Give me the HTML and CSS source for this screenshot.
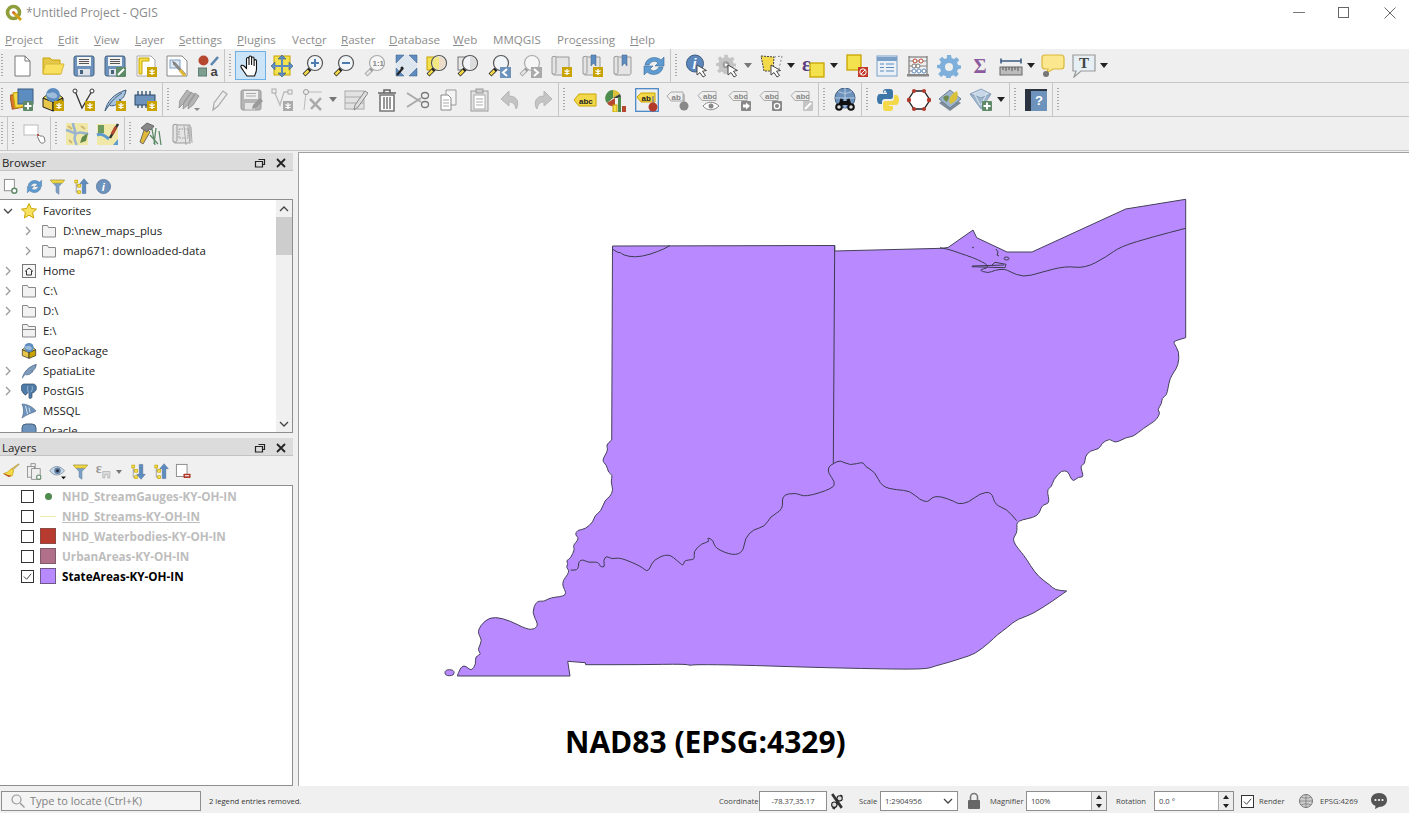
FILE: index.html
```html
<!DOCTYPE html>
<html>
	<head>
		<meta charset="UTF-8">
		<title>*Untitled Project - QGIS</title>
		<link rel="stylesheet" href="styles.css">
	</head>
	<body>
		<!-- icon sheet -->
		<svg class="sheet" xmlns="http://www.w3.org/2000/svg">
			<symbol id="badge" viewBox="0 0 24 24"><rect x="13" y="13" width="10" height="10" fill="#c9a400"/><path d="M18 15v6M15.4 16.5l5.2 3M15.4 19.5l5.2-3" stroke="#fff" stroke-width="1.3"/></symbol>
			<symbol id="badgeGray" viewBox="0 0 24 24"><rect x="13" y="13" width="10" height="10" fill="#aaa"/><path d="M18 15v6M15.4 16.5l5.2 3M15.4 19.5l5.2-3" stroke="#fff" stroke-width="1.3"/></symbol>
			<symbol id="plusBadge" viewBox="0 0 24 24"><rect x="13" y="13" width="10" height="10" rx="1" fill="#5f8a68"/><path d="M18 14.5v7M14.5 18h7" stroke="#fff" stroke-width="2"/></symbol>
			<symbol id="cursor" viewBox="0 0 24 24"><path d="M12 11v10l3-2.5 3 4.5 2.5-1.5-3-4.3 4-.7z" fill="#fff" stroke="#444"/></symbol>
			<symbol id="lens" viewBox="0 0 24 24"><path d="M9 15l-6 6" stroke="#222" stroke-width="4"/><path d="M7.5 16.5l-4 4" stroke="#f0d848" stroke-width="2.5"/><circle cx="14" cy="9" r="7.5" fill="#f2f5f8" stroke="#555" stroke-width="1.2"/></symbol>
			<symbol id="lensGray" viewBox="0 0 24 24"><path d="M9 15l-6 6" stroke="#999" stroke-width="4"/><path d="M7.5 16.5l-4 4" stroke="#e4e4e4" stroke-width="2.5"/><circle cx="14" cy="9" r="7.5" fill="#f6f6f6" stroke="#aaa" stroke-width="1.2"/></symbol>
			<symbol id="scroll" viewBox="0 0 24 24"><path d="M3 3c3-1.5 5 0 5 0h12v16c0 1-1 2-2 2H6c-2 0-3-1-3-2z" fill="#e4e4e4" stroke="#999"/><path d="M7 3v15c0 2-2 3-4 1" fill="none" stroke="#999"/></symbol>
			<symbol id="floppy" viewBox="0 0 24 24"><rect x="2" y="2" width="20" height="20" rx="2" fill="#6d93bd" stroke="#46627f"/><rect x="5" y="3" width="14" height="9" fill="#f2f2f2"/><path d="M7 5.5h10M7 7.5h10M7 9.5h10" stroke="#555"/><rect x="6" y="15" width="12" height="6.5" fill="#dde3e8"/><rect x="8" y="16" width="3" height="4" fill="#46627f"/></symbol>
			<symbol id="tag" viewBox="0 0 24 24"><path d="M1 7.5l4-4h14v9H5z" fill="#efefef" stroke="#aaa"/></symbol>
			<symbol id="gear" viewBox="0 0 24 24"><path d="M10 1h4l.6 3 2.4 1 2.5-1.7 2.8 2.8L20 8.6l1 2.4 3 .6v3l-3 .6-1 2.4 1.8 2.5-2.8 2.8-2.5-1.7-2.4 1-.6 3h-4l-.6-3-2.4-1-2.5 1.7-2.8-2.8L4 17l-1-2.4-3-.6v-3l3-.6 1-2.4-1.8-2.5 2.8-2.8L7.5 5l2.4-1z" fill="currentColor"/><circle cx="12" cy="13" r="4" fill="#efefef"/></symbol>
			<symbol id="hand" viewBox="0 0 24 24"><path d="M8 22c-2-3-5-7-6-9-.6-1.5 1.5-2.5 3-1l2.5 2.5V5c0-2 2.5-2 2.5 0v6V3.5c0-2 2.6-2 2.6 0V11V4.5c0-2 2.5-2 2.5 0V12V7c0-1.8 2.4-1.8 2.4 0v8c0 3-1 4.5-2 7z" fill="#fff" stroke="#111" stroke-width="1.1"/></symbol>
			<symbol id="panSel" viewBox="0 0 24 24"><rect x="4" y="2" width="16" height="19" fill="#f3e14d" stroke="#c8a400"/><path d="M12 1l4 4h-8zM12 23l4-4H8zM1 12l4-4v8zM23 12l-4-4v8z" fill="#5d8cc0" stroke="#3d5c80" stroke-width=".6"/><path d="M12 4v16M4 12h16" stroke="#5d8cc0" stroke-width="2"/></symbol>
			<symbol id="zoomIn" viewBox="0 0 24 24"><use href="#lens"/><path d="M14 5v8M10 9h8" stroke="#4d7cb0" stroke-width="2"/></symbol>
			<symbol id="zoomOut" viewBox="0 0 24 24"><use href="#lens"/><path d="M10 9h8" stroke="#4d7cb0" stroke-width="2"/></symbol>
			<symbol id="zoomFull" viewBox="0 0 24 24"><rect x="2" y="1" width="21" height="21" fill="#dde6ef"/><path d="M2 1h8L2 9zM23 1h-8l8 8zM23 22h-8l8-8zM2 22h8l-8-8z" fill="#5d8cc0" stroke="#3d5c80" stroke-width=".5"/><path d="M9 14l-6 7" stroke="#222" stroke-width="2"/><circle cx="8" cy="14" r="1.5" fill="#222"/></symbol>
			<symbol id="zoomSel" viewBox="0 0 24 24"><rect x="2" y="3" width="13" height="13" fill="#f3e14d" stroke="#c8a400"/><use href="#lens"/><path d="M14 2.5a6.5 6.5 0 0 0 0 13z" fill="#f3e14d" opacity=".7"/><path d="M14 2.5a6.5 6.5 0 0 1 0 13z" fill="#eedccb"/></symbol>
			<symbol id="zoomLayer" viewBox="0 0 24 24"><rect x="2" y="3" width="13" height="13" fill="#e8e8e8" stroke="#777"/><use href="#lens"/><path d="M14 2.5a6.5 6.5 0 0 1 0 13z" fill="#dcdcdc"/></symbol>
			<symbol id="zoomLast" viewBox="0 0 24 24"><use href="#lens"/><rect x="13" y="13" width="11" height="11" fill="#6d93bd"/><path d="M20 15l-4 3.5 4 3.5" fill="none" stroke="#fff" stroke-width="2"/></symbol>
			<symbol id="zoomNext" viewBox="0 0 24 24"><use href="#lensGray"/><rect x="13" y="13" width="11" height="11" fill="#aaa"/><path d="M16 15l4 3.5-4 3.5" fill="none" stroke="#fff" stroke-width="2"/></symbol>
			<symbol id="refresh" viewBox="0 0 24 24"><path d="M3 11C4 4 13 1 19 6l3-3v9h-9l3-3c-3-3-7-2-9 2z" fill="#5d9bd0" stroke="#3d6c98" stroke-width=".6"/><path d="M21 13c-1 7-10 10-16 5l-3 3v-9h9l-3 3c3 3 7 2 9-2z" fill="#5d9bd0" stroke="#3d6c98" stroke-width=".6"/></symbol>
			<symbol id="action" viewBox="0 0 24 24"><g color="#c4c4c4"><use href="#gear" width="20" height="20"/></g><circle cx="10" cy="10.8" r="3.500" fill="#999"/><path d="M8.8 9l3.200 1.800-3.200 1.800z" fill="#fff"/><use href="#cursor"/></symbol>
			<symbol id="selectTool" viewBox="0 0 24 24"><path d="M2 2l13 1-1 14H5z" fill="#f3d84a" stroke="#444" stroke-dasharray="2 1"/><path d="M15 3l8-1-3 13" fill="none" stroke="#888" stroke-dasharray="2 2"/><use href="#cursor"/></symbol>
			<symbol id="deselect" viewBox="0 0 24 24"><rect x="2" y="1" width="14" height="15" fill="#f3e14d" stroke="#c8a400" stroke-width="1.3"/><rect x="13" y="13" width="10" height="10" fill="#c0392b"/><circle cx="18" cy="18" r="3.2" fill="none" stroke="#fff"/><path d="M16 20l4-4" stroke="#fff"/></symbol>
			<symbol id="table" viewBox="0 0 24 24"><rect x="2" y="2" width="20" height="20" fill="#eaf0f6" stroke="#7ba0c8"/><path d="M2 3h20v4H2z" fill="#7ba0c8"/><path d="M5 10h4M11 10h8M5 13.5h4M11 13.5h8M5 17h4M11 17h8" stroke="#5d8cc0" stroke-width="1.2"/></symbol>
			<symbol id="abacus" viewBox="0 0 24 24"><path d="M3 2v19M21 2v19M3 3h18" stroke="#666" fill="none"/><rect x="1" y="20" width="22" height="2.5" fill="#888"/><path d="M3 7h18M3 12h18M3 17h18" stroke="#888"/><circle cx="9" cy="7" r="2" fill="#fff" stroke="#b5482f"/><circle cx="15" cy="7" r="2" fill="#fff" stroke="#b5482f"/><circle cx="8" cy="12" r="2" fill="#fff" stroke="#777"/><circle cx="12" cy="12" r="2" fill="#fff" stroke="#777"/><circle cx="8" cy="17" r="2" fill="#fff" stroke="#5d8cc0"/><circle cx="13" cy="17" r="2" fill="#fff" stroke="#5d8cc0"/><circle cx="18" cy="17" r="2" fill="#fff" stroke="#5d8cc0"/></symbol>
			<symbol id="ruler" viewBox="0 0 24 24"><path d="M2 7h20M2 4.5v5M22 4.5v5" stroke="#3d5c80" stroke-width="1.6"/><rect x="1" y="13" width="22" height="8" fill="#bbb" stroke="#666"/><path d="M4 13v3M7 13v4M10 13v3M13 13v4M16 13v3M19 13v4" stroke="#555"/></symbol>
			<symbol id="tip" viewBox="0 0 24 24"><path d="M4 1h16c2 0 3 1 3 3v8c0 2-1 3-3 3H12l-6 4 1-4H4c-2 0-3-1-3-3V4c0-2 1-3 3-3z" fill="#fbe88e" stroke="#d9b838" stroke-width="1.2"/><circle cx="5" cy="20" r="3" fill="#777"/></symbol>
			<symbol id="annot" viewBox="0 0 24 24"><path d="M1 1h22v16H9l-7 6 2-6H1z" fill="#e6f0f4" stroke="#999" stroke-width="1.2"/></symbol>
			<symbol id="dsm" viewBox="0 0 24 24"><rect x="1" y="6" width="14" height="14" transform="rotate(-10 8 13)" fill="#d9772b" stroke="#a5581e"/><rect x="4" y="4" width="14" height="15" transform="rotate(-8 11 11)" fill="#f3d84a" stroke="#c8a400"/><rect x="8" y="1" width="15" height="15" fill="#5d8cc0" stroke="#3d5c80"/><use href="#plusBadge"/></symbol>
			<symbol id="gpkg" viewBox="0 0 24 24"><path d="M2 10v9l10 4V14z" fill="#e7c64a" stroke="#222"/><path d="M22 10v9l-10 4V14z" fill="#c9a400" stroke="#222"/><path d="M2 10l10-8 10 8-10 4z" fill="#f3e14d" stroke="#222"/><circle cx="12" cy="7" r="7" fill="#5d8cc0"/><path d="M6 5c3 1 5-2 8 0s3 4 1 5-6 0-9-2" fill="#9dbcdb"/></symbol>
			<symbol id="gpkgNew" viewBox="0 0 24 24"><use href="#gpkg"/><use href="#badge"/></symbol>
			<symbol id="shp" viewBox="0 0 24 24"><path d="M3 3l7 17 10-17" fill="none" stroke="#333" stroke-width="1.3"/><circle cx="3" cy="3" r="2" fill="#fff" stroke="#333"/><circle cx="20" cy="3" r="2" fill="#fff" stroke="#333"/><use href="#badge"/></symbol>
			<symbol id="feather" viewBox="0 0 24 24"><path d="M2 23c2-9 8-17 21-21-1 6-3 9-7 10l2 .5c-3 4-7 6-11 5" fill="#a9c4e0" stroke="#3e5a7a"/><path d="M2 23C7 15 12 9 19 5" stroke="#3e5a7a" fill="none"/></symbol>
			<symbol id="chip" viewBox="0 0 24 24"><rect x="1" y="7" width="20" height="10" fill="#6d93bd" stroke="#2f4a68"/><path d="M4 3v4M8 3v4M12 3v4M16 3v4M4 17v3M8 17v3M12 17v3" stroke="#2f4a68" stroke-width="1.3"/><use href="#badge"/></symbol>
			<symbol id="edits" viewBox="0 0 24 24"><path d="M2 20l1-8 7-10 4 3-7 10zM6 21l1-7 7-10 4 3-7 10zM11 21l1-7 6-9 4 3-6 9z" fill="#b5b5b5" stroke="#999"/><path d="M17 20h6l-3 3z" fill="#888"/></symbol>
			<symbol id="pencil" viewBox="0 0 24 24"><path d="M5 22l1-7 9-12 4 3-9 12z" fill="#eee" stroke="#aaa" stroke-width="1.2"/></symbol>
			<symbol id="saveGray" viewBox="0 0 24 24"><rect x="2" y="2" width="20" height="20" rx="2" fill="#b5b5b5" stroke="#999"/><rect x="5" y="3" width="14" height="8" fill="#efefef"/><path d="M7 5.5h10M7 8h10" stroke="#aaa"/><rect x="6" y="15" width="10" height="6.5" fill="#e4e4e4"/><path d="M13 21l1-4 7-7 3 3-7 7z" fill="#999"/></symbol>
			<symbol id="vertexAdd" viewBox="0 0 24 24"><path d="M4 3l6 14 4-13 7 0" fill="none" stroke="#bbb" stroke-width="1.3"/><rect x="2" y="1" width="4" height="4" fill="#efefef" stroke="#aaa"/><rect x="18" y="2" width="4" height="4" fill="#efefef" stroke="#aaa"/><use href="#badgeGray"/></symbol>
			<symbol id="vertexTool" viewBox="0 0 24 24"><path d="M5 4l-2 18M5 4h16" stroke="#bbb" fill="none"/><circle cx="5" cy="4" r="2.5" fill="#efefef" stroke="#999"/><path d="M9 11l11 11M20 10L10 21" stroke="#aaa" stroke-width="2.5"/></symbol>
			<symbol id="attrEdit" viewBox="0 0 24 24"><rect x="1" y="3" width="19" height="18" fill="#e2e2e2" stroke="#aaa"/><path d="M1 9h19M1 15h19" stroke="#aaa"/><path d="M10 22l1-5 10-14 3 2-10 14z" fill="#ddd" stroke="#888"/></symbol>
			<symbol id="trash" viewBox="0 0 24 24"><path d="M3 5h18M9 5V2h6v3" fill="none" stroke="#666" stroke-width="1.6"/><path d="M5 7h14v16H5z" fill="#fff" stroke="#777" stroke-width="1.6"/><path d="M9 9v12M12 9v12M15 9v12" stroke="#777" stroke-width="1.5"/></symbol>
			<symbol id="cut" viewBox="0 0 24 24"><path d="M1 5l14 9M1 19l14-9" stroke="#aaa" stroke-width="2"/><ellipse cx="19" cy="7.5" rx="3.5" ry="3" fill="#efefef" stroke="#777" stroke-width="1.3"/><ellipse cx="19" cy="16.5" rx="3.5" ry="3" fill="#efefef" stroke="#777" stroke-width="1.3"/></symbol>
			<symbol id="copy" viewBox="0 0 24 24"><path d="M9 2h10v15H9z" fill="#f4f4f4" stroke="#999"/><path d="M4 7h7l3 3v12H4z" fill="#fff" stroke="#888"/><path d="M6 12h6M6 15h6M6 18h6" stroke="#aaa"/></symbol>
			<symbol id="paste" viewBox="0 0 24 24"><rect x="3" y="3" width="17" height="20" fill="#e2e2e2" stroke="#999"/><rect x="8" y="1" width="7" height="4" fill="#ccc" stroke="#999"/><rect x="6" y="7" width="11" height="14" fill="#fff" stroke="#aaa"/><path d="M8 11h7M8 14h7M8 17h7" stroke="#aaa"/></symbol>
			<symbol id="undo" viewBox="0 0 24 24"><path d="M10 3L2 11l8 7v-4c4 0 6 2 7 7 3-4 3-13-7-13z" fill="#c4c4c4" stroke="#b5b5b5"/></symbol>
			<symbol id="redo" viewBox="0 0 24 24"><path d="M14 3l8 8-8 7v-4c-4 0-6 2-7 7-3-4-3-13 7-13z" fill="#c4c4c4" stroke="#b5b5b5"/></symbol>
			<symbol id="labelTag" viewBox="0 0 24 24"><path d="M1 12l5-6h17v12H6z" fill="#f3d84a" stroke="#c8a400"/></symbol>
			<symbol id="diagram" viewBox="0 0 24 24"><path d="M9 2a8 8 0 0 0-6 13l6-5z" fill="#4e8c4e"/><path d="M9 2a8 8 0 0 1 7 4l-7 4z" fill="#d9c23a"/><path d="M16 6a8 8 0 0 1 1 4H9z" fill="#3e3e3e"/><path d="M3 15a8 8 0 0 0 8 3v-8z" fill="#b5482f"/><rect x="9" y="17" width="4" height="7" fill="#f3e14d" stroke="#c8a400"/><rect x="14" y="9" width="3" height="15" fill="#4e8c4e"/><rect x="18" y="18" width="4" height="6" fill="#b5482f"/></symbol>
			<symbol id="pin" viewBox="0 0 24 24"><rect x=".7" y=".7" width="22.6" height="22.6" fill="#efefef" stroke="#3f7fc4" stroke-width="1.2"/><path d="M2 9l4-4h14v9H6z" fill="#f3d84a" stroke="#c8a400"/></symbol>
			<symbol id="pinHead" viewBox="0 0 24 24"><path d="M18 8v9" stroke="#888" stroke-width="1.5"/><circle cx="18" cy="19" r="4.5" fill="#b33a2a"/></symbol>
			<symbol id="pinGray" viewBox="0 0 24 24"><path d="M1 8l4-4h12v9H5z" fill="#efefef" stroke="#aaa"/></symbol>
			<symbol id="pinGrayHead" viewBox="0 0 24 24"><path d="M18 6v10" stroke="#aaa" stroke-width="1.5"/><circle cx="18" cy="18" r="4.5" fill="#888"/></symbol>
			<symbol id="eyeBadge" viewBox="0 0 24 24"><path d="M6 18c4-5 11-5 16 0-5 5-12 5-16 0z" fill="#fff" stroke="#888"/><circle cx="14" cy="18" r="2.5" fill="#888"/></symbol>
			<symbol id="moveBadge" viewBox="0 0 24 24"><rect x="13" y="13" width="10" height="10" rx="1" fill="#888"/><path d="M15 16.5h3v-2l4 3.5-4 3.5v-2h-3z" fill="#fff"/></symbol>
			<symbol id="rotBadge" viewBox="0 0 24 24"><rect x="13" y="13" width="10" height="10" rx="1" fill="#888"/><circle cx="18" cy="18" r="2.7" fill="none" stroke="#fff" stroke-width="1.3"/></symbol>
			<symbol id="editBadge" viewBox="0 0 24 24"><rect x="13" y="13" width="10" height="10" rx="1" fill="#c4c4c4"/><path d="M15 21l6-6" stroke="#fff" stroke-width="2"/></symbol>
			<symbol id="meta" viewBox="0 0 24 24"><circle cx="12" cy="10" r="10" fill="#6d93bd" stroke="#3d5c80"/><path d="M2 10h20M12 0v20M5 3c4 3 10 3 14 0M5 17c4-3 10-3 14 0" stroke="#c9d8e8" fill="none" stroke-width=".8"/><path d="M9 13h6v4H9z" fill="#111"/><path d="M9 11l-2 6M15 11l2 6" stroke="#111" stroke-width="3"/><circle cx="6" cy="19" r="3.8" fill="#111"/><circle cx="18" cy="19" r="3.8" fill="#111"/><circle cx="6" cy="19" r="1.8" fill="#ddd"/><circle cx="18" cy="19" r="1.8" fill="#ddd"/></symbol>
			<symbol id="python" viewBox="0 0 24 24"><path d="M10 1h4c2 0 3 1 3 3v5c0 1-1 2-2 2H9c-2 0-3 1-3 3v2H4c-2 0-3-2-3-5s1-5 3-5h7V4.500H7V4c0-2 1-3 3-3z" fill="#3f76a8"/><path d="M18 7h2c2 0 3 2 3 5s-1 5-3 5h-7v1h4v2c0 2-1 3-3 3h-4c-2 0-3-1-3-3v-5c0-1 1-2 2-2h6c2 0 3-1 3-3z" fill="#f3d84a"/><circle cx="9" cy="3.5" r="1" fill="#fff"/></symbol>
			<symbol id="hex" viewBox="0 0 24 24"><path d="M7 3h10l6 9-6 9H7l-6-9z" fill="#fff" stroke="#222" stroke-width="1.3"/><g fill="#b33a2a"><circle cx="7" cy="3" r="2"/><circle cx="17" cy="3" r="2"/><circle cx="22" cy="12" r="2.2"/><circle cx="17" cy="21" r="2"/><circle cx="7" cy="21" r="2"/><circle cx="2" cy="12" r="2.2"/></g></symbol>
			<symbol id="leaf" viewBox="0 0 24 24"><path d="M1 15l11 8 11-8-3-2-8 6-8-6z" fill="#7e8a96"/><path d="M1 11l11-9 11 9-11 9z" fill="#9db5cc" stroke="#6a7f93"/><path d="M12 16c-2-5 1-10 7-13 2 5 0 11-7 13z" fill="#d9c23a"/><path d="M5 10c2-3 5-3 6-1 0 3-3 5-3 5z" fill="#6e8a4e"/></symbol>
			<symbol id="layerPlus" viewBox="0 0 24 24"><path d="M1 6l11-5 10 5-10 4z" fill="#c9d8e8" stroke="#8aa2bc"/><path d="M1 6l11 15 10-15-10 4z" fill="#9db5cc" stroke="#8aa2bc"/><path d="M5 5l6 12M18 5l-6 12" stroke="#e0e8f0"/><use href="#plusBadge"/></symbol>
			<symbol id="help" viewBox="0 0 24 24"><rect x="1" y="1" width="22" height="22" fill="#6d93bd"/><rect x="1" y="1" width="6" height="22" fill="#2b3340"/><rect x="1" y="1" width="22" height="2" fill="#2b3340"/></symbol>
			<symbol id="rectCursor" viewBox="0 0 24 24"><rect x="2" y="3" width="14" height="10" fill="#fff" stroke="#bbb"/><path d="M18 14c-2-2-3 0-2 2l2 4c1 2 5 1 5-1l-1-4c-1-1-2-1-4-1z" fill="#fff" stroke="#777"/><circle cx="16" cy="13" r="1" fill="#b33a2a"/></symbol>
			<symbol id="mapA" viewBox="0 0 24 24"><rect x="1" y="1" width="22" height="22" fill="#efe8a8"/><path d="M1 8c6 1 8 5 12 3s7 2 10 0M8 1c0 5 4 8 2 13s2 6 1 9" stroke="#9ab4d0" stroke-width="2.5" fill="none"/><path d="M3 4l4 3M16 4l4 3M4 18l3 3" stroke="#d0b870" stroke-width="2"/><path d="M15 21l2-6 6-4-2 8z" fill="#5f8a4e"/></symbol>
			<symbol id="mapB" viewBox="0 0 24 24"><rect x="1" y="2" width="21" height="21" fill="#f0e8a8"/><path d="M1 13c5-2 8 1 12 4" stroke="#5d9bd0" stroke-width="3" fill="none"/><rect x="2" y="3" width="6" height="8" fill="#6e9a5e"/><path d="M14 16L22 2" stroke="#333" stroke-width="2.5"/><path d="M16 12l4-7" stroke="#b5482f" stroke-width="3"/><path d="M17 23l5-6v6z" fill="#5d9bd0"/></symbol>
			<symbol id="hammer" viewBox="0 0 24 24"><path d="M6 5l5 5-7 12-3-2z" fill="#e0b83a" stroke="#555" stroke-width=".8"/><path d="M2 6l6-5 7 3-3 4-2-1-2 3z" fill="#888" stroke="#555" stroke-width=".8"/><path d="M13 7l3 16M17 6l-2 16M20 9l2 14M11 13l8 9" stroke="#5f8a68" stroke-width="1.3"/></symbol>
			<symbol id="scrollLines" viewBox="0 0 24 24"><use href="#scroll"/><rect x="9" y="7" width="9" height="9" fill="none" stroke="#999" stroke-dasharray="1.5 1"/><path d="M14 4l2 19M18 4l2 18M21 5l1 16" stroke="#aaa"/></symbol>
			<symbol id="addGroup" viewBox="0 0 24 24"><rect x="2" y="2" width="14" height="16" fill="#fff" stroke="#888" stroke-width="1.3"/><circle cx="16" cy="18" r="3.5" fill="#fff" stroke="#5f8a68" stroke-width="2"/></symbol>
			<symbol id="filter" viewBox="0 0 24 24"><path d="M2 3h20l-8 9v11l-4-3v-8z" fill="#7ba0c8" stroke="#5d7ea0" stroke-width=".8"/><path d="M2 3h20l-3 4H5z" fill="#f3d84a" stroke="#c8a400" stroke-width=".8"/></symbol>
			<symbol id="treeUp" viewBox="0 0 24 24"><path d="M6 4v16h4M6 11h4" fill="none" stroke="#888"/><rect x="4" y="3" width="4" height="4" fill="#f3e14d" stroke="#c8a400"/><rect x="8" y="9" width="4" height="4" fill="#f3e14d" stroke="#c8a400"/><rect x="8" y="18" width="4" height="4" fill="#f3e14d" stroke="#c8a400"/><path d="M17 1l6 7h-3.5v14h-5V8H11z" fill="#5d8cc0" stroke="#3d5c80" stroke-width=".6"/></symbol>
			<symbol id="treeDown" viewBox="0 0 24 24"><path d="M6 4v16h4M6 11h4" fill="none" stroke="#888"/><rect x="4" y="3" width="4" height="4" fill="#f3e14d" stroke="#c8a400"/><rect x="8" y="9" width="4" height="4" fill="#f3e14d" stroke="#c8a400"/><rect x="8" y="18" width="4" height="4" fill="#f3e14d" stroke="#c8a400"/><path d="M17 23l6-7h-3.5V2h-5v14H11z" fill="#5d8cc0" stroke="#3d5c80" stroke-width=".6"/></symbol>
			<symbol id="brush" viewBox="0 0 24 24"><path d="M14 10L23 2l-1-1-10 7z" fill="#e0b83a" stroke="#886" stroke-width=".6"/><path d="M12 8l3 3-2 7-5 1L1 15l5-2z" fill="#f3d84a" stroke="#c8a400"/><path d="M1 15l7 4 3-1" fill="#b5482f" stroke="#b5482f"/></symbol>
			<symbol id="dup" viewBox="0 0 24 24"><rect x="7" y="1" width="6" height="6" fill="#efefef" stroke="#777"/><rect x="2" y="5" width="10" height="15" fill="#efefef" stroke="#777"/><rect x="8" y="8" width="12" height="15" fill="#efefef" stroke="#777"/><circle cx="18" cy="20" r="3" fill="#fff" stroke="#5f8a68" stroke-width="1.5"/></symbol>
			<symbol id="eye" viewBox="0 0 24 24"><path d="M1 11c6-8 14-8 21 0-7 8-15 8-21 0z" fill="#c9d8e8" stroke="#6a7f93"/><circle cx="12" cy="11" r="4.5" fill="#5d7ea0"/><circle cx="12" cy="11" r="2" fill="#223"/><path d="M17 19h7l-3.5 4z" fill="#111"/></symbol>
			<symbol id="exprGrayBox" viewBox="0 0 24 24"><path d="M11 12h10v9h-3v-5h-4v5h-3z" fill="#ddd" stroke="#aaa"/></symbol>
			<symbol id="removeLayer" viewBox="0 0 24 24"><rect x="2" y="2" width="15" height="17" fill="#fff" stroke="#888" stroke-width="1.3"/><rect x="12" y="15" width="10" height="6" rx="1" fill="#b33a2a"/><path d="M14 18h6" stroke="#fff" stroke-width="1.5"/></symbol>
			<symbol id="folder" viewBox="0 0 16 16"><path d="M1.5 14V2.5h5l1 2h7V14z" fill="#f2f2f2" stroke="#888"/></symbol>
			<symbol id="folderOpen" viewBox="0 0 16 16"><path d="M1.5 14V1.5h5l1 2h7V14z" fill="#f2f2f2" stroke="#888"/><path d="M1.5 6.5h13" stroke="#888"/></symbol>
			<symbol id="home" viewBox="0 0 16 16"><rect x="1.5" y="1.5" width="13" height="13" fill="#f6f6f6" stroke="#777"/><path d="M4 8.5l4-3.5 4 3.5M5.5 8v4h5V8" fill="none" stroke="#333"/></symbol>
			<symbol id="star" viewBox="0 0 16 16"><path d="M8 .5l2.3 5 5.200.6-3.900 3.500 1.100 5.400L8 12.200 3.300 15l1.100-5.400L.5 6.100l5.200-.6z" fill="#f7e15f" stroke="#c8a400"/></symbol>
			<symbol id="elephant" viewBox="0 0 16 16"><path d="M3 1h9c3 0 4 3 3 6-1 2-3 3-4 3v4c0 1-2 2-3 1V10H6c-1 3-2 2-3 1S0 7 0 5s1-4 3-4z" fill="#4f7ba8" stroke="#2f4a68" stroke-width=".7"/><path d="M7 3c-1 3 0 6 1 8M11 3c1 2 0 5-1 6" stroke="#c9d8e8" stroke-width=".6" fill="none"/></symbol>
			<symbol id="mssql" viewBox="0 0 16 16"><path d="M1 1c5 0 11 3 14 7-3 2-9 3-14 7 2-5 2-9 0-14z" fill="#6d93bd" stroke="#46627f" stroke-width=".6"/><path d="M4.5 3l2 8M8 4.5l1 5" stroke="#d7e2ee"/></symbol>
			<symbol id="oracle" viewBox="0 0 16 16"><rect x="1" y="1" width="14" height="14" rx="4" fill="#6d93bd" stroke="#46627f"/></symbol>
			<symbol id="featherSm" viewBox="0 0 24 24"><path d="M2 23c2-9 8-17 21-21-1 6-3 9-7 10l2 .5c-3 4-7 6-11 5" fill="#7f9cbc" stroke="#3e5a7a"/></symbol>
			<symbol id="dock" viewBox="0 0 12 12"><path d="M4.5 2.5h6v5h-2M1.5 4.5h7v5.500h-7z" fill="none" stroke="#222" stroke-width="1.2"/></symbol>
			<symbol id="closeX" viewBox="0 0 12 12"><path d="M2 2l8 8M10 2l-8 8" stroke="#222" stroke-width="1.8"/></symbol>
			<symbol id="chevRight" viewBox="0 0 10 10"><path d="M3 1l4 4-4 4" fill="none" stroke="#999" stroke-width="1.3"/></symbol>
			<symbol id="chevDown" viewBox="0 0 10 10"><path d="M1 3l4 4 4-4" fill="none" stroke="#444" stroke-width="1.3"/></symbol>
			<symbol id="chevUp" viewBox="0 0 10 10"><path d="M1 7l4-4 4 4" fill="none" stroke="#444" stroke-width="1.3"/></symbol>
			<symbol id="logo" viewBox="0 0 18 18"><circle cx="8.5" cy="8.5" r="6" fill="none" stroke="#8f9e3b" stroke-width="3.6"/><path d="M9 9l7 7" stroke="#d4a017" stroke-width="3"/><circle cx="8.5" cy="8.5" r="1.5" fill="#d46a2a"/></symbol>
			<symbol id="search" viewBox="0 0 14 14"><circle cx="5.5" cy="5.5" r="4.5" fill="none" stroke="#999" stroke-width="1.2"/><path d="M9 9l4.5 4.5" stroke="#999" stroke-width="1.4"/></symbol>
			<symbol id="coordIcon" viewBox="0 0 16 16"><path d="M3 1l9 13M12 2L4 15" stroke="#333" stroke-width="2.5"/><circle cx="5" cy="11" r="2.5" fill="#ddd" stroke="#222"/><circle cx="10" cy="5" r="2.5" fill="#ddd" stroke="#222"/></symbol>
			<symbol id="lock" viewBox="0 0 14 18"><path d="M3.5 8V5a3.5 3.5 0 0 1 7 0v3" fill="none" stroke="#777" stroke-width="1.6"/><rect x="1" y="8" width="12" height="9" rx="1" fill="#666"/></symbol>
			<symbol id="globe" viewBox="0 0 16 16"><circle cx="8" cy="8" r="6.5" fill="#ccc" stroke="#777"/><path d="M1.5 8h13M8 1.5v13M3 4c3 1.5 7 1.5 10 0M3 12c3-1.5 7-1.5 10 0" stroke="#777" fill="none" stroke-width=".7"/></symbol>
			<symbol id="chat" viewBox="0 0 18 18"><path d="M9 1c5 0 8 3 8 7s-3 7-8 7l-4 2 .5-3C3 13 1 11 1 8c0-4 3-7 8-7z" fill="#555"/><circle cx="5.5" cy="8" r="1.1" fill="#fff"/><circle cx="9" cy="8" r="1.1" fill="#fff"/><circle cx="12.5" cy="8" r="1.1" fill="#fff"/></symbol>
			<symbol id="new2" viewBox="0 0 24 24"><path d="M5 2h10l5 5v15H5z" fill="#fff" stroke="#777"/><path d="M15 2v5h5" fill="none" stroke="#777"/></symbol>
			<symbol id="open" viewBox="0 0 24 24"><path d="M2 20V4h7l2 2h8v14z" fill="#e5c84a" stroke="#c8a400"/><path d="M2 20L4 10h19l-3 10z" fill="#f7e15f" stroke="#d9b838"/></symbol>
			<symbol id="saveAs" viewBox="0 0 24 24"><use href="#floppy"/><rect x="13" y="13" width="10" height="10" rx="1" fill="#5f8a68"/><path d="M15 21l6-6" stroke="#fff" stroke-width="2"/></symbol>
			<symbol id="layoutNew" viewBox="0 0 24 24"><path d="M3 2h14l4 4v16H3z" fill="#fff" stroke="#aaa"/><path d="M5 4h10v3H8v13H5z" fill="#f3e14d" stroke="#c8a400"/><use href="#badge"/></symbol>
			<symbol id="layoutMgr" viewBox="0 0 24 24"><path d="M2 2h15l5 5v15H2z" fill="#fff" stroke="#888"/><rect x="5" y="6" width="10" height="8" fill="#dfe8f0" stroke="#7ba0c8"/><path d="M9 9l11 12" stroke="#888" stroke-width="3"/><path d="M7 7l3 1-1 3z" fill="#777"/><path d="M15 16l5 6" stroke="#e0b83a" stroke-width="3"/></symbol>
			<symbol id="style" viewBox="0 0 24 24"><circle cx="7.5" cy="6.5" r="5" fill="#b5482f"/><path d="M15 11l7-8" stroke="#5d85b0" stroke-width="2.5"/><rect x="2.5" y="14" width="8" height="8" fill="#7e9e8f" stroke="#5f7f70"/></symbol>
			<symbol id="mapNew" viewBox="0 0 24 24"><use href="#scroll"/><use href="#badge"/></symbol>
			<symbol id="markNew" viewBox="0 0 24 24"><use href="#scroll"/><path d="M11 1h5v11l-2.5-3-2.5 3z" fill="#5d8cc0" stroke="#3d5c80" stroke-width=".5"/><use href="#badge"/></symbol>
			<symbol id="marks" viewBox="0 0 24 24"><use href="#scroll"/><path d="M11 1h5v11l-2.5-3-2.5 3z" fill="#5d8cc0" stroke="#3d5c80" stroke-width=".5"/></symbol>
			<symbol id="featherNew" viewBox="0 0 24 24"><use href="#feather"/><use href="#badge"/></symbol>
		</svg>

		<div class="app">
			<div class="titleBar">
				<svg class="logo"><use href="#logo"/></svg>
				<span class="titleText">*Untitled Project - QGIS</span>
				<div class="winButtons">
					<span class="winMin"></span>
					<span class="winMax"></span>
					<svg class="winClose" viewBox="0 0 12 12"><path d="M.5 .5l11 11M11.5 .5l-11 11" stroke="#666"/></svg>
				</div>
			</div>

			<div class="menuBar">
				<span class="m1"><u>P</u>roject</span>
				<span class="m2"><u>E</u>dit</span>
				<span class="m3"><u>V</u>iew</span>
				<span class="m4"><u>L</u>ayer</span>
				<span class="m5"><u>S</u>ettings</span>
				<span class="m6"><u>P</u>lugins</span>
				<span class="m7">Vect<u>o</u>r</span>
				<span class="m8"><u>R</u>aster</span>
				<span class="m9"><u>D</u>atabase</span>
				<span class="m10"><u>W</u>eb</span>
				<span class="m11">MMQGIS</span>
				<span class="m12">Pro<u>c</u>essing</span>
				<span class="m13"><u>H</u>elp</span>
			</div>

			<div class="toolRow">
				<div class="group first">
					<i class="grip"></i>
					<b class="tool"><svg><use href="#new2"/></svg></b>
					<b class="tool"><svg><use href="#open"/></svg></b>
					<b class="tool"><svg><use href="#floppy"/></svg></b>
					<b class="tool"><svg><use href="#saveAs"/></svg></b>
					<b class="tool"><svg><use href="#layoutNew"/></svg></b>
					<b class="tool"><svg><use href="#layoutMgr"/></svg></b>
					<b class="tool"><svg viewBox="0 0 24 24"><use href="#style"/><text x="14.5" y="22" class="iconText" font-size="13" fill="#444">a</text></svg></b>
				</div>
				<div class="group">
					<i class="grip"></i>
					<b class="tool active"><svg><use href="#hand"/></svg></b>
					<b class="tool"><svg><use href="#panSel"/></svg></b>
					<b class="tool"><svg><use href="#zoomIn"/></svg></b>
					<b class="tool"><svg><use href="#zoomOut"/></svg></b>
					<b class="tool"><svg viewBox="0 0 24 24"><use href="#lensGray"/><text x="9.5" y="12" class="iconText" font-size="8" fill="#888" font-weight="700">1:1</text></svg></b>
					<b class="tool"><svg><use href="#zoomFull"/></svg></b>
					<b class="tool"><svg><use href="#zoomSel"/></svg></b>
					<b class="tool"><svg><use href="#zoomLayer"/></svg></b>
					<b class="tool"><svg><use href="#zoomLast"/></svg></b>
					<b class="tool"><svg><use href="#zoomNext"/></svg></b>
					<b class="tool"><svg><use href="#mapNew"/></svg></b>
					<b class="tool"><svg><use href="#markNew"/></svg></b>
					<b class="tool"><svg><use href="#marks"/></svg></b>
					<b class="tool"><svg><use href="#refresh"/></svg></b>
				</div>
				<div class="group last">
					<i class="grip"></i>
					<b class="tool"><svg viewBox="0 0 24 24"><circle cx="10" cy="9.5" r="8.5" fill="#5b87bd" stroke="#3d5c80"/><text x="7.5" y="14.5" class="iconText" font-size="14" font-weight="700" font-style="italic" fill="#fff">i</text><use href="#cursor"/></svg></b>
					<b class="tool drop"><svg><use href="#action"/></svg><em class="arrow gray"></em></b>
					<b class="tool drop"><svg><use href="#selectTool"/></svg><em class="arrow"></em></b>
					<b class="tool drop"><svg viewBox="0 0 24 24"><rect x="8" y="9" width="14" height="14" fill="#f3e14d" stroke="#c8a400" stroke-width="1.3"/><text x="0" y="17" class="serifText" font-size="20" fill="#5a3d80">&#949;</text></svg><em class="arrow"></em></b>
					<b class="tool"><svg><use href="#deselect"/></svg></b>
					<b class="tool narrow"><svg><use href="#table"/></svg></b>
					<b class="tool"><svg><use href="#abacus"/></svg></b>
					<b class="tool"><svg class="gearBlue"><use href="#gear"/></svg></b>
					<b class="tool"><svg viewBox="0 0 24 24"><text x="12" y="19" text-anchor="middle" class="serifText" font-size="20" font-weight="700" fill="#8e5a9e">&#931;</text></svg></b>
					<b class="tool drop"><svg><use href="#ruler"/></svg><em class="arrow"></em></b>
					<b class="tool narrow"><svg><use href="#tip"/></svg></b>
					<b class="tool drop"><svg viewBox="0 0 24 24"><use href="#annot"/><text x="12" y="14" text-anchor="middle" class="serifText" font-size="15" font-weight="700" fill="#444">T</text></svg><em class="arrow"></em></b>
				</div>
			</div>

			<div class="toolRow">
				<div class="group first">
					<i class="grip"></i>
					<b class="tool"><svg><use href="#dsm"/></svg></b>
					<b class="tool"><svg><use href="#gpkgNew"/></svg></b>
					<b class="tool"><svg><use href="#shp"/></svg></b>
					<b class="tool"><svg><use href="#featherNew"/></svg></b>
					<b class="tool"><svg><use href="#chip"/></svg></b>
				</div>
				<div class="group">
					<i class="grip"></i>
					<b class="tool"><svg><use href="#edits"/></svg></b>
					<b class="tool"><svg><use href="#pencil"/></svg></b>
					<b class="tool"><svg><use href="#saveGray"/></svg></b>
					<b class="tool"><svg><use href="#vertexAdd"/></svg></b>
					<b class="tool drop"><svg><use href="#vertexTool"/></svg><em class="arrow gray"></em></b>
					<b class="tool"><svg><use href="#attrEdit"/></svg></b>
					<b class="tool"><svg><use href="#trash"/></svg></b>
					<b class="tool"><svg><use href="#cut"/></svg></b>
					<b class="tool"><svg><use href="#copy"/></svg></b>
					<b class="tool"><svg><use href="#paste"/></svg></b>
					<b class="tool"><svg><use href="#undo"/></svg></b>
					<b class="tool"><svg><use href="#redo"/></svg></b>
				</div>
				<div class="group">
					<i class="grip"></i>
					<b class="tool"><svg viewBox="0 0 24 24"><use href="#labelTag"/><text x="6" y="15.5" class="tagText" fill="#222">abc</text></svg></b>
					<b class="tool"><svg><use href="#diagram"/></svg></b>
					<b class="tool"><svg viewBox="0 0 24 24"><use href="#pin"/><text x="6.5" y="12.5" class="tagText" fill="#222">ab</text><use href="#pinHead"/></svg></b>
					<b class="tool"><svg viewBox="0 0 24 24"><use href="#pinGray"/><text x="5.5" y="11.5" class="tagText" fill="#888">ab</text><use href="#pinGrayHead"/></svg></b>
					<b class="tool"><svg viewBox="0 0 24 24"><use href="#tag"/><text x="6" y="11" class="tagText" fill="#888">abc</text><use href="#eyeBadge"/></svg></b>
					<b class="tool"><svg viewBox="0 0 24 24"><use href="#tag"/><text x="6" y="11" class="tagText" fill="#888">abc</text><use href="#moveBadge"/></svg></b>
					<b class="tool"><svg viewBox="0 0 24 24"><use href="#tag"/><text x="6" y="11" class="tagText" fill="#888">abc</text><use href="#rotBadge"/></svg></b>
					<b class="tool"><svg viewBox="0 0 24 24"><use href="#tag"/><text x="6" y="11" class="tagText" fill="#888">abc</text><use href="#editBadge"/></svg></b>
				</div>
				<div class="group">
					<i class="grip"></i>
					<b class="tool"><svg><use href="#meta"/></svg></b>
				</div>
				<div class="group">
					<i class="grip"></i>
					<b class="tool"><svg><use href="#python"/></svg></b>
					<b class="tool"><svg><use href="#hex"/></svg></b>
					<b class="tool"><svg><use href="#leaf"/></svg></b>
					<b class="tool drop"><svg><use href="#layerPlus"/></svg><em class="arrow"></em></b>
				</div>
				<div class="group">
					<i class="grip"></i>
					<b class="tool"><svg viewBox="0 0 24 24"><use href="#help"/><text x="15" y="17" text-anchor="middle" class="iconText" font-size="13" fill="#fff">?</text></svg></b>
				</div>
				<div class="group last"><i class="grip"></i></div>
			</div>

			<div class="toolRow">
				<div class="group first"><i class="grip"></i></div>
				<div class="group">
					<i class="grip"></i>
					<b class="tool"><svg><use href="#rectCursor"/></svg></b>
				</div>
				<div class="group">
					<i class="grip"></i>
					<b class="tool"><svg><use href="#mapA"/></svg></b>
					<b class="tool"><svg><use href="#mapB"/></svg></b>
				</div>
				<div class="group last">
					<i class="grip"></i>
					<b class="tool"><svg><use href="#hammer"/></svg></b>
					<b class="tool"><svg><use href="#scrollLines"/></svg></b>
				</div>
			</div>

			<div class="workspace">
				<div class="sidebar">
					<div class="dock browserDock">
						<div class="dockTitle">
							<span>Browser</span>
							<svg><use href="#dock"/></svg>
							<svg><use href="#closeX"/></svg>
						</div>
						<div class="dockTools">
							<b><svg><use href="#addGroup"/></svg></b>
							<b><svg><use href="#refresh"/></svg></b>
							<b><svg><use href="#filter"/></svg></b>
							<b><svg><use href="#treeUp"/></svg></b>
							<b><svg viewBox="0 0 24 24"><circle cx="12" cy="12" r="10" fill="#6d93bd" stroke="#4d6f96"/><text x="9.5" y="18" class="iconText" font-size="16" font-weight="700" font-style="italic" fill="#fff">i</text></svg></b>
						</div>
						<div class="treeBox">
							<ul class="tree">
								<li><svg class="twig"><use href="#chevDown"/></svg><svg class="icon"><use href="#star"/></svg>Favorites</li>
								<li class="sub"><svg class="twig"><use href="#chevRight"/></svg><svg class="icon"><use href="#folder"/></svg>D:\new_maps_plus</li>
								<li class="sub"><svg class="twig"><use href="#chevRight"/></svg><svg class="icon"><use href="#folder"/></svg>map671: downloaded-data</li>
								<li><svg class="twig"><use href="#chevRight"/></svg><svg class="icon"><use href="#home"/></svg>Home</li>
								<li><svg class="twig"><use href="#chevRight"/></svg><svg class="icon"><use href="#folder"/></svg>C:\</li>
								<li><svg class="twig"><use href="#chevRight"/></svg><svg class="icon"><use href="#folder"/></svg>D:\</li>
								<li><span class="twig"></span><svg class="icon"><use href="#folderOpen"/></svg>E:\</li>
								<li><span class="twig"></span><svg class="icon"><use href="#gpkg"/></svg>GeoPackage</li>
								<li><svg class="twig"><use href="#chevRight"/></svg><svg class="icon"><use href="#featherSm"/></svg>SpatiaLite</li>
								<li><svg class="twig"><use href="#chevRight"/></svg><svg class="icon"><use href="#elephant"/></svg>PostGIS</li>
								<li><span class="twig"></span><svg class="icon"><use href="#mssql"/></svg>MSSQL</li>
								<li><span class="twig"></span><svg class="icon"><use href="#oracle"/></svg>Oracle</li>
							</ul>
							<div class="scrollBar">
								<svg><use href="#chevUp"/></svg>
								<div class="track"><div class="thumb"></div></div>
								<svg><use href="#chevDown"/></svg>
							</div>
						</div>
					</div>

					<div class="dock layersDock">
						<div class="dockTitle">
							<span>Layers</span>
							<svg><use href="#dock"/></svg>
							<svg><use href="#closeX"/></svg>
						</div>
						<div class="dockTools">
							<b><svg><use href="#brush"/></svg></b>
							<b><svg><use href="#dup"/></svg></b>
							<b><svg><use href="#eye"/></svg></b>
							<b><svg><use href="#filter"/></svg></b>
							<b><svg viewBox="0 0 24 24"><text x="1" y="14" class="serifText" font-size="20" fill="#999">&#949;</text><use href="#exprGrayBox"/></svg></b>
							<em class="arrow gray"></em>
							<b><svg><use href="#treeDown"/></svg></b>
							<b><svg><use href="#treeUp"/></svg></b>
							<b><svg><use href="#removeLayer"/></svg></b>
						</div>
						<ul class="layerList">
							<li><span class="check"></span><span class="swatch"><i class="dot"></i></span><span class="name">NHD_StreamGauges-KY-OH-IN</span></li>
							<li><span class="check"></span><span class="swatch"><i class="streamLine"></i></span><span class="name under">NHD_Streams-KY-OH-IN</span></li>
							<li><span class="check"></span><span class="swatch water"></span><span class="name">NHD_Waterbodies-KY-OH-IN</span></li>
							<li><span class="check"></span><span class="swatch urban"></span><span class="name">UrbanAreas-KY-OH-IN</span></li>
							<li><span class="check on"><svg viewBox="0 0 12 12"><path d="M2 6l3 3 5-6" fill="none" stroke="#333"/></svg></span><span class="swatch state"></span><span class="name shown">StateAreas-KY-OH-IN</span></li>
						</ul>
					</div>
				</div>

				<div class="mapCanvas">
					<svg class="mapSvg" viewBox="299 153 1110 633">
						<g class="land">
							<ellipse cx="449.5" cy="672.7" rx="4.5" ry="3"/>
							<path id="landPath"/>
						</g>
						<g class="borders">
							<path d="M834.7 245.5L833.3 463.3"/>
							<path id="riverPath"/>
							<path id="michiganPath"/>
							<path id="eriePath"/>
							<path d="M971.7 266.7L1005 267.7L1006 264.3L995 262.3L992 265M972 266L1004 265"/>
							<ellipse cx="1006.5" cy="258.5" rx="2.5" ry="1.5"/>
							<path d="M996 249l2 3-1 3 2 1"/>
							<circle cx="973" cy="247.5" r=".5"/>
						</g>
					</svg>
					<div class="caption">NAD83 (EPSG:4329)</div>
				</div>
			</div>

			<div class="statusBar">
				<div class="locator"><svg><use href="#search"/></svg><span>Type to locate (Ctrl+K)</span></div>
				<span class="message">2 legend entries removed.</span>
				<span class="stLabel coordLabel">Coordinate</span>
				<span class="field coordField">-78.37,35.17</span>
				<svg class="coordIcon"><use href="#coordIcon"/></svg>
				<span class="stLabel scaleLabel">Scale</span>
				<span class="field scaleField">1:2904956<svg><use href="#chevDown"/></svg></span>
				<svg class="lockIcon"><use href="#lock"/></svg>
				<span class="stLabel magLabel">Magnifier</span>
				<span class="field spin magField">100%<i class="spinBtns"><s></s><s class="down"></s></i></span>
				<span class="stLabel rotLabel">Rotation</span>
				<span class="field spin rotField">0.0 °<i class="spinBtns"><s></s><s class="down"></s></i></span>
				<span class="check renderCheck"><svg viewBox="0 0 12 12"><path d="M2 6l3 3 5-6" fill="none" stroke="#333"/></svg></span>
				<span class="stLabel renderLabel">Render</span>
				<svg class="globeIcon"><use href="#globe"/></svg>
				<span class="stLabel crsLabel">EPSG:4269</span>
				<svg class="chatIcon"><use href="#chat"/></svg>
			</div>
		</div>
		<script src="map.js"></script>
	</body>
</html>
```

FILE: styles.css
```css
* {
	box-sizing: border-box;
}
html, body {
	margin: 0;
	padding: 0;
	height: 100%;
	overflow: hidden;
}
body {
	background-color: #f0f0f0;
	font: 11.4px/16px "Open Sans", "Liberation Sans", sans-serif;
	color: #222;
}
ul {
	margin: 0;
	padding: 0;
	list-style: none;
}
.sheet {
	position: absolute;
	width: 0;
	height: 0;
}
.tagText {
	font: 700 8px "Liberation Sans", sans-serif;
}
.iconText {
	font-family: "Liberation Sans", sans-serif;
}
.serifText {
	font-family: "Liberation Serif", serif;
}
.app {
	display: flex;
	flex-direction: column;
	width: 1409px;
	height: 813px;
}

/* title and menu */
.titleBar {
	display: flex;
	align-items: center;
	height: 29px;
	flex: none;
	padding: 0 0 4px 5px;
	background-color: #fff;
}
.logo {
	width: 18px;
	height: 18px;
}
.titleText {
	margin-left: 3px;
	font-size: 12px;
	color: #8a8a8a;
}
.winButtons {
	display: flex;
	align-items: center;
	margin-left: auto;
}
.winMin {
	width: 12px;
	height: 1px;
	margin-right: 33px;
	background-color: #777;
}
.winMax {
	width: 11px;
	height: 11px;
	margin-right: 35px;
	border: 1px solid #666;
}
.winClose {
	width: 12px;
	height: 12px;
	margin-right: 13px;
}
.menuBar {
	display: flex;
	height: 20px;
	flex: none;
	padding-left: 5px;
	font-size: 11.6px;
	line-height: 21px;
	color: #8c8c8c;
	background-color: #fff;
}
.menuBar u {
	text-decoration-thickness: 1px;
}
.menuBar span {
	flex: none;
}
.m1 { width: 53px; }
.m2 { width: 36px; }
.m3 { width: 41px; }
.m4 { width: 44px; }
.m5 { width: 58px; }
.m6 { width: 55px; }
.m7 { width: 49px; }
.m8 { width: 48px; }
.m9 { width: 64px; }
.m10 { width: 40px; }
.m11 { width: 64px; }
.m12 { width: 73px; }

/* toolbars */
.toolRow {
	display: flex;
	height: 34px;
	flex: none;
	border-bottom: 1px solid #c6c6c6;
	background-color: #efefef;
}
.group {
	display: flex;
	align-items: center;
	padding-right: 1px;
	border-right: 1px solid #c6c6c6;
}
.group.last {
	border-right: none;
}
.grip {
	flex: none;
	width: 2px;
	height: 24px;
	margin: 0 4px;
	background: repeating-linear-gradient(to bottom, #a8a8a8 0, #a8a8a8 1px, transparent 1px, transparent 3px);
}
.first .grip {
	margin: 0 3px 0 1px;
}
.tool {
	display: flex;
	align-items: center;
	justify-content: center;
	flex: none;
	width: 31px;
	height: 29px;
	border: 1px solid transparent;
}
.tool svg {
	flex: none;
	width: 24px;
	height: 24px;
	overflow: visible;
}
.tool.active {
	background-color: #cce4f7;
	border-color: #6fb1e4;
}
.tool.drop {
	justify-content: flex-start;
	width: 43px;
	padding-left: 2.5px;
}
.tool.narrow {
	width: 30px;
}
.arrow {
	flex: none;
	width: 0;
	height: 0;
	margin-left: 4px;
	border-left: 4px solid transparent;
	border-right: 4px solid transparent;
	border-top: 5px solid #222;
}
.arrow.gray {
	border-top-color: #777;
}
.gearBlue {
	color: #7fb0dc;
}

/* panels */
.workspace {
	display: flex;
	flex: 1;
	min-height: 0;
	padding-top: 1px;
}
.sidebar {
	display: flex;
	flex-direction: column;
	flex: none;
	width: 293px;
	margin-right: 5px;
	padding-top: 1px;
}
.dock {
	display: flex;
	flex-direction: column;
}
.browserDock {
	height: 280px;
}
.layersDock {
	flex: 1;
	margin-top: 5px;
	min-height: 0;
}
.dockTitle {
	display: flex;
	align-items: center;
	flex: none;
	height: 18px;
	padding: 2px 6px 0 2px;
	background-color: #dcdcdc;
	border-bottom: 1px solid #c2c2c2;
}
.dockTitle span {
	flex: 1;
}
.dockTitle svg {
	width: 12px;
	height: 12px;
	margin-left: 9px;
}
.dockTools {
	display: flex;
	align-items: center;
	flex: none;
	height: 28px;
	padding: 2px 0 0 0;
}
.layersDock .dockTools {
	height: 29px;
}
.dockTools b {
	display: flex;
	justify-content: center;
	flex: none;
	width: 23px;
	height: 17px;
}
.dockTools svg {
	width: 17px;
	height: 17px;
	overflow: visible;
}
.layersDock .dockTools .arrow {
	margin: 0 4px 0 1px;
	border-left-width: 3.5px;
	border-right-width: 3.5px;
	border-top-width: 4px;
}
.treeBox {
	display: flex;
	flex: 1;
	min-height: 0;
	background-color: #fff;
	border: 1px solid #8e8e8e;
	border-left: none;
}
.tree {
	flex: 1;
	padding-top: 1px;
	overflow: hidden;
}
.tree li {
	display: flex;
	align-items: center;
	height: 20px;
	color: #222;
	white-space: nowrap;
}
.tree li.sub {
	padding-left: 20px;
}
.twig {
	flex: none;
	width: 16px;
	height: 10px;
	padding: 0;
}
.icon {
	flex: none;
	width: 16px;
	height: 16px;
	margin: 0 6px 0 5px;
}
.scrollBar {
	display: flex;
	flex-direction: column;
	flex: none;
	width: 16px;
	background-color: #f0f0f0;
}
.scrollBar svg {
	flex: none;
	width: 16px;
	height: 10px;
	margin: 4px 0 3px;
}
.track {
	flex: 1;
}
.thumb {
	height: 38px;
	background-color: #cdcdcd;
}
.layerList {
	flex: 1;
	background-color: #fff;
	border: 1px solid #8e8e8e;
	border-left: none;
	font-size: 11.7px;
	font-weight: 700;
}
.layerList li {
	display: flex;
	align-items: center;
	height: 20px;
	padding-left: 21px;
}
.check {
	display: block;
	flex: none;
	width: 13px;
	height: 13px;
	background-color: #fff;
	border: 1px solid #333;
}
.check svg {
	display: block;
}
.swatch {
	display: flex;
	align-items: center;
	justify-content: center;
	flex: none;
	width: 16px;
	height: 16px;
	margin: 0 6px;
}
.dot {
	width: 7px;
	height: 7px;
	border-radius: 50%;
	background-color: #4f8a4f;
}
.streamLine {
	width: 16px;
	height: 1px;
	background-color: #efe9a8;
}
.water {
	background-color: #b73c2f;
	border: 1px solid #8c4a44;
}
.urban {
	background-color: #b0708a;
	border: 1px solid #7f5a6a;
}
.state {
	background-color: #b98aff;
	border: 1px solid #6d5a8a;
}
.name {
	color: #bdbdbd;
	white-space: nowrap;
}
.name.under {
	text-decoration: underline;
}
.name.shown {
	color: #000;
}

/* map */
.mapCanvas {
	position: relative;
	flex: 1;
	min-width: 0;
	overflow: hidden;
	background-color: #fff;
	border: 1px solid #a0a0a0;
	border-right: none;
	border-bottom: none;
}
.mapSvg {
	display: block;
	width: 100%;
	height: 100%;
}
.land {
	fill: #b98aff;
	stroke: #44405a;
	stroke-width: 1;
	stroke-linejoin: round;
}
.borders {
	fill: none;
	stroke: #3c3a50;
	stroke-width: 1;
	stroke-linejoin: round;
}
.caption {
	position: absolute;
	left: 266px;
	top: 570px;
	font: 700 30px/38px "Open Sans", "Liberation Sans", sans-serif;
	color: #000;
	white-space: nowrap;
}

/* status bar */
.statusBar {
	display: flex;
	align-items: center;
	flex: none;
	height: 27px;
	padding: 3px 0 0 1px;
	font-size: 7.6px;
	line-height: 12px;
	color: #444;
	background-color: #f0f0f0;
}
.statusBar > * {
	flex: none;
}
.locator {
	display: flex;
	align-items: center;
	width: 200px;
	height: 20px;
	padding-left: 9px;
	font-size: 11px;
	color: #808080;
	background-color: #f4f4f4;
	border: 1px solid #8e8e8e;
}
.locator svg {
	width: 14px;
	height: 14px;
	margin-right: 5px;
}
.message {
	width: 510px;
	margin-left: 8px;
	color: #333;
}
.stLabel {
	white-space: nowrap;
}
.coordLabel {
	width: 40px;
}
.field {
	display: flex;
	align-items: center;
	height: 20px;
	padding-left: 4px;
	background-color: #fff;
	border: 1px solid #8e8e8e;
}
.coordField {
	justify-content: center;
	width: 68px;
	padding: 0;
}
.coordIcon {
	width: 17px;
	height: 17px;
	margin: 0 13px 0 2px;
}
.scaleLabel {
	width: 18px;
}
.scaleField {
	width: 78px;
	margin-left: 3px;
}
.scaleField svg {
	width: 10px;
	height: 10px;
	margin-left: auto;
	margin-right: 4px;
}
.lockIcon {
	width: 14px;
	height: 18px;
	margin: 0 9px;
}
.magLabel {
	width: 33px;
}
.spin {
	width: 81px;
	margin-left: 3px;
}
.spinBtns {
	display: flex;
	flex-direction: column;
	align-items: center;
	justify-content: space-around;
	width: 15px;
	height: 18px;
	margin-left: auto;
	background-color: #ededed;
	border-left: 1px solid #aaa;
}
.spinBtns s {
	width: 0;
	height: 0;
	border-left: 3px solid transparent;
	border-right: 3px solid transparent;
	border-bottom: 4px solid #222;
}
.spinBtns s.down {
	border-bottom: none;
	border-top: 4px solid #222;
}
.rotLabel {
	width: 30px;
	margin-left: 9px;
}
.rotField {
	width: 80px;
	margin-left: 8px;
}
.renderCheck {
	margin-left: 7px;
}
.renderLabel {
	width: 23px;
	margin-left: 5px;
}
.globeIcon {
	width: 16px;
	height: 16px;
	margin: 0 6px 0 16px;
}
.crsLabel {
	width: 36px;
}
.chatIcon {
	width: 18px;
	height: 18px;
	margin-left: 14px;
}
```

FILE: map.js
```js
// outline points read off the picture, in page pixels
var eastEdge = [[1185.7,337.7],[1175,340.7],[1173.3,342.7],[1179.3,351.7],[1178.3,365],[1174,372],[1170,378.3],[1168,388],[1166.7,395],[1161.7,398.3],[1162,403],[1157.3,410],[1160,412],[1158.3,416.7],[1155,421],[1143.3,428.3],[1133.3,436.7],[1127,437],[1115,443.3],[1110,438.3],[1101.7,443.3],[1099.3,449],[1090,450.7],[1085,456.7],[1085,464],[1080,465.7],[1084,477.3],[1078.3,476.7],[1073.3,481.7],[1070,476.7],[1068.3,471.7],[1061.7,470],[1053.3,480],[1051.7,486.7],[1046.7,490],[1050,503.3],[1041.7,505],[1038.3,516.7],[1016.7,520.7],[1017,528],[1016.7,533.3],[1011.7,540.7],[1025,556.7],[1030,565],[1038.3,576.7],[1050,585],[1055,590],[1066.7,591]];
var southEdge = [[1066.7,591],[1036.7,612.7],[1016.7,619.3],[1008,627],[997,635],[990,642],[975,654],[962,658],[950,662],[935,666],[925,669.5],[860,668.5],[800,667],[740,665],[695,664.5],[690,665.5],[685,664],[640,664.7],[585.7,664.7]];
var westEdge = [[457.3,676],[460,668.3],[464,665.3],[468,668],[471.7,670.7],[476,664],[475,656.7],[481.7,654],[477.3,650],[482.7,640],[476.7,631.7],[485,620],[495,616.7],[510,620.7],[526.7,629.3],[535,629.3],[538.3,624],[531.7,612.7],[536.7,600.7],[544,601.7],[550,597.7],[568.3,595.7],[560.7,583.3],[570,571.7],[566,567.3],[568.3,563.3],[566,560.7],[570.7,558.3],[575,548.3],[572.7,546],[579.3,538.3],[575,535],[577.3,530],[585,529.3],[593.3,521.7],[595,515],[600.7,511.7],[605,500],[610,496.7],[613.3,490],[610.7,481.7],[612.7,475],[608.3,472.7],[606.7,465],[601.7,460.7],[608.3,450],[606,445],[611.7,440]];
var river = [[570.7,570],[578.3,571],[578.3,561.7],[582.7,559.3],[588.3,562.7],[598.3,561.7],[600,566.7],[605,567.3],[603.3,560],[606.7,555.7],[611.7,559.3],[620,557.3],[641.7,566.7],[646.7,571.7],[650,568.3],[653.3,560],[668.3,553.3],[678.3,561.7],[683.3,566],[684,561],[688.3,560],[695,559.3],[693.3,551.7],[701.7,543.3],[710,541.7],[706.7,537.3],[713.3,540],[715,548.3],[733.3,555.7],[743.3,551.7],[745,538.3],[753.3,529.3],[765,526.7],[770,516.7],[783.3,509.3],[781.7,495],[796.7,492.7],[805,497.3],[833.3,488.3],[835,481.7],[828.3,473.3],[828.3,466.7],[834,463.3],[840,460],[850,465.7],[863.3,461.7],[865,466.7],[875,471.7],[881.7,486.7],[896.7,490],[910,490.7],[920,500],[928.3,502.3],[931.7,497.3],[940,496],[955,501.7],[958.3,504],[968.3,502.7],[980,493.3],[991.7,491.7],[995,505],[1006.7,509],[1016.7,520.7]];
var michigan = [[612.5,249],[618,253],[620,252],[623,255],[635,257.5],[650,254.5],[665,248.5],[670,245.5]];
var erie = [[940,247.7],[948,249],[960,253.3],[973.3,257.7],[981.7,261.7],[987,264.5],[988,268],[978.3,270],[988.3,273.3],[995,270],[1005,269],[1010,271.7],[1023.3,277.3],[1040,272.7],[1065,266],[1085,268.3],[1106.7,256.7],[1120,246.7],[1153.3,236.7],[1185.7,228.3]];

// runs a smooth line through the points, from the point the pen is on
function curve(pts) {
	var d = "";
	for (var i = 1; i < pts.length - 1; i++) {
		var midX = (pts[i][0] + pts[i + 1][0]) / 2;
		var midY = (pts[i][1] + pts[i + 1][1]) / 2;
		d += "Q" + pts[i][0] + " " + pts[i][1] + " " + midX + " " + midY;
	}
	var last = pts[pts.length - 1];
	return d + "L" + last[0] + " " + last[1];
}

function start(pts) {
	return "M" + pts[0][0] + " " + pts[0][1];
}

var land = "M612.5 246L834.7 245.5V251L941.7 248.3L948 247.5L973 230L976.7 237.7L1007 252H1032L1125.7 209L1185.7 199.3V337.7";
land += curve(eastEdge) + curve(southEdge);
land += "L585.3 662.7L567.7 661.3L570 676H457.3";
land += curve(westEdge) + "Z";

document.getElementById("landPath").setAttribute("d", land);
document.getElementById("riverPath").setAttribute("d", start(river) + curve(river));
document.getElementById("michiganPath").setAttribute("d", start(michigan) + curve(michigan));
document.getElementById("eriePath").setAttribute("d", start(erie) + curve(erie));
```
